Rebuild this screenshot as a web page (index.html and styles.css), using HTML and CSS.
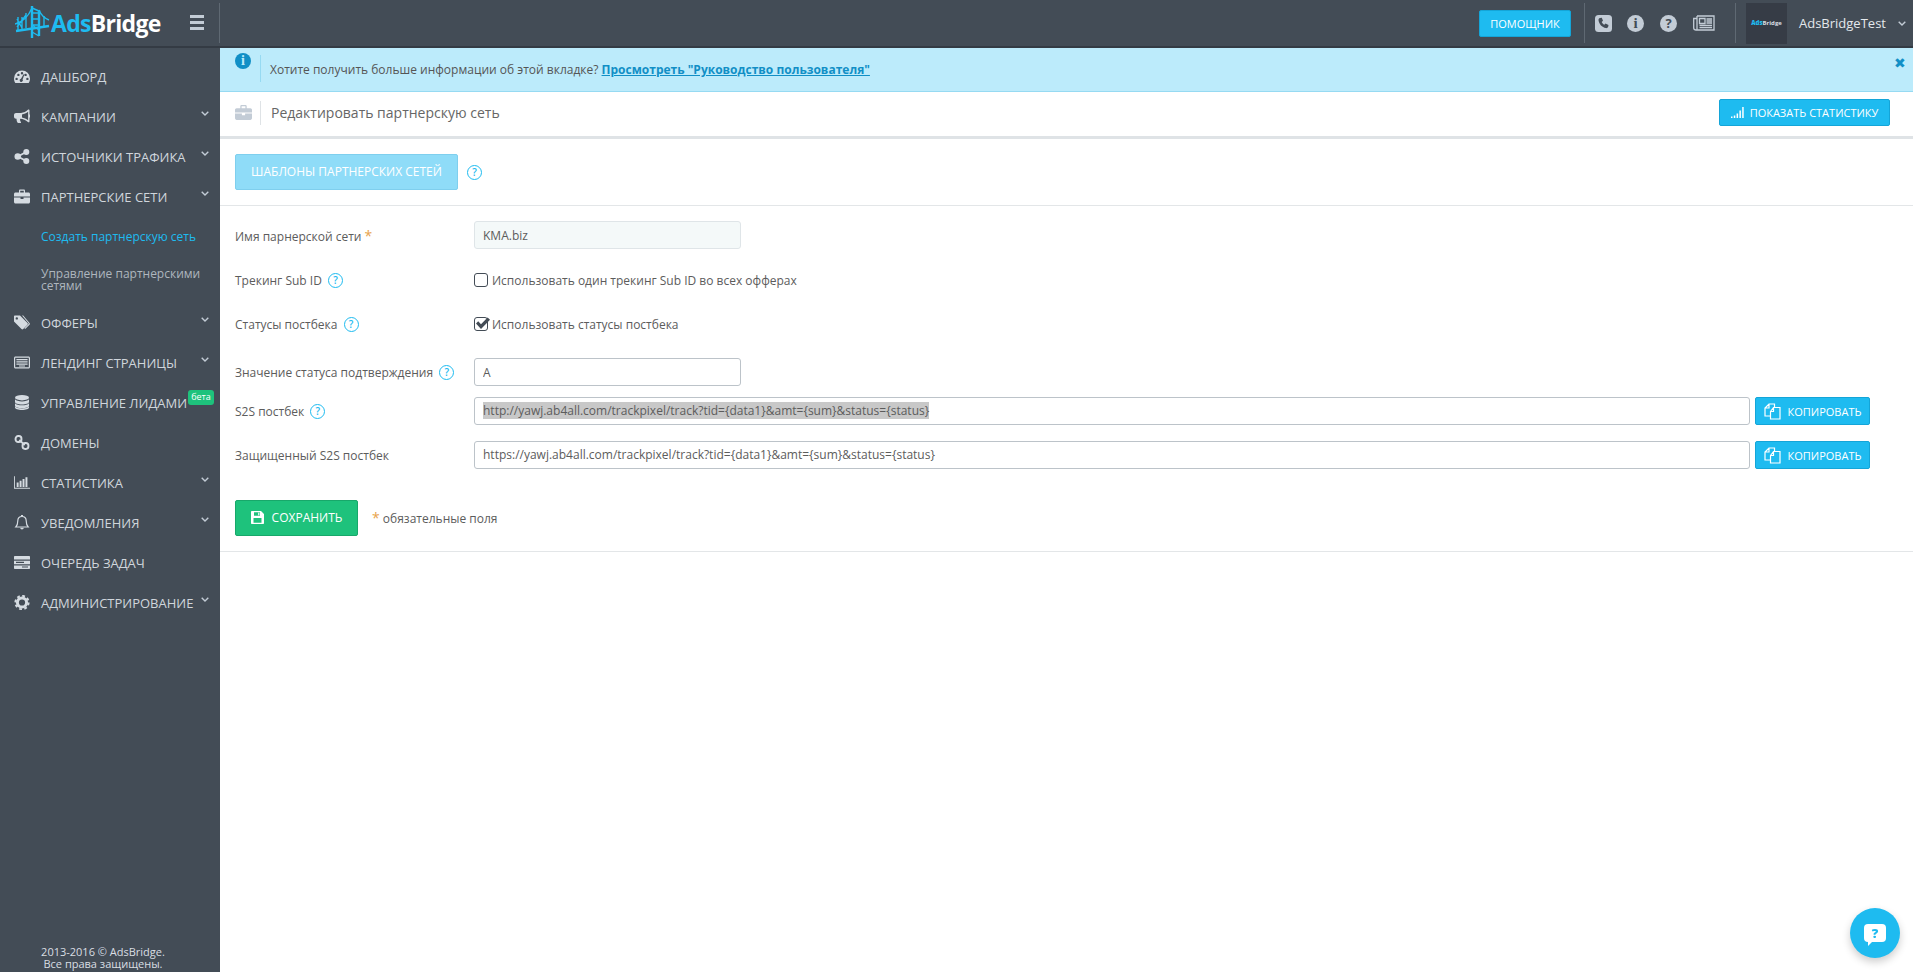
FILE: index.html
```html
<!DOCTYPE html>
<html lang="ru">
<head>
    <meta charset="UTF-8">
    <meta name="viewport" content="width=device-width, initial-scale=1.0">
    <title>AdsBridge - Редактировать партнерскую сеть</title>
    <link rel="stylesheet" href="styles.css">
</head>
<body>
    <!-- Icons -->
    <svg class="sprite" width="0" height="0">
        <symbol id="i-dash" viewBox="0 0 16 14"><path fill-rule="evenodd" d="M8 1a8 8 0 0 0-8 8c0 1.7.5 3.2 1.3 4.4h13.4c.8-1.2 1.3-2.7 1.3-4.4a8 8 0 0 0-8-8zM2.6 8.2a1.2 1.2 0 1 0 0 2.4 1.2 1.2 0 0 0 0-2.4zM4.4 4.2a1.2 1.2 0 1 0 0 2.4 1.2 1.2 0 0 0 0-2.4zM8 2.6a1.2 1.2 0 1 0 0 2.4 1.2 1.2 0 0 0 0-2.4zM11.6 4.2a1.2 1.2 0 1 0 0 2.4 1.2 1.2 0 0 0 0-2.4zM13.4 8.2a1.2 1.2 0 1 0 0 2.4 1.2 1.2 0 0 0 0-2.4zM9.6 4.8 7 9.2a1.6 1.6 0 1 0 1.6.7l1.8-4.8z"/></symbol>
        <symbol id="i-horn" viewBox="0 0 16 14"><path fill-rule="evenodd" d="M14.6 0c-.3 0-.5.1-.7.3C12 2 9.800 3.300 7 3.500H2C.9 3.500 0 4.400 0 5.500v1.800c0 1 .9 2 2 2h.6c-.2 1.300.1 2.600.8 3.700.2.300.5.500.8.500h2.200c.5 0 .8-.5.500-.9-.8-1-1-2.200-.7-3.300 2.800.2 5.700 1.500 7.700 3.200.2.200.4.300.7.300.4 0 .9-.4.900-.9V8a1.500 1.500 0 0 0 0-3V1c0-.6-.4-1-.9-1zm-.5 2.300v8.500c-1.800-1.300-4-2.300-6.100-2.700V4.900c2.100-.3 4.300-1.300 6.100-2.600z"/></symbol>
        <symbol id="i-share" viewBox="0 0 14 14"><circle cx="11" cy="2.800" r="2.800"/><circle cx="3" cy="7" r="3"/><circle cx="11" cy="11.200" r="2.800"/><path d="M3 7l8-4.200M3 7l8 4.200" stroke="currentColor" stroke-width="1.800"/></symbol>
        <symbol id="i-case" viewBox="0 0 16 14"><path fill-rule="evenodd" d="M5 3V1.200C5 .5 5.500 0 6.200 0h3.600C10.500 0 11 .5 11 1.200V3h3.500c.8 0 1.500.7 1.500 1.500V7H0V4.500C0 3.700.7 3 1.500 3zm1.200 0h3.600V1.200H6.200zM0 8h6.500v1.500h3V8H16v4.500c0 .8-.7 1.500-1.500 1.500h-13C.7 14 0 13.300 0 12.500z"/></symbol>
        <symbol id="i-tag" viewBox="0 0 16 14"><path fill-rule="evenodd" d="M1 0h5l7.500 7.500c.5.500.5 1.200 0 1.700l-4.300 4.300c-.5.500-1.200.5-1.700 0L0 6V1c0-.6.4-1 1-1zm1.800 1.700a1.200 1.200 0 1 0 0 2.400 1.200 1.200 0 0 0 0-2.400z"/><path d="M8 0h1.200l6.300 7.500c.5.500.5 1.200 0 1.700l-4.300 4.300-.8-.7 4-4c.4-.5.400-.9 0-1.300z"/></symbol>
        <symbol id="i-list" viewBox="0 0 16 14"><path fill-rule="evenodd" d="M1.500 1h13c.8 0 1.500.7 1.500 1.500v9c0 .8-.7 1.500-1.500 1.500h-13C.7 13 0 12.300 0 11.500v-9C0 1.700.7 1 1.500 1zM1.200 2.200v9.600h13.600V2.200zM2.400 3.400h11.200v1.400H2.400zM2.400 5.800h11.200v1.200H2.400zM2.400 8h11.200v1.200H2.400zM5 10h6v1H5z"/></symbol>
        <symbol id="i-db" viewBox="0 0 14 15"><ellipse cx="7" cy="2.700" rx="7" ry="2.700"/><path d="M0 4.300c1 1.400 3.800 2.100 7 2.100s6-.7 7-2.100v2.600C14 8.400 10.900 9.400 7 9.400S0 8.400 0 6.900zM0 8.200c1 1.300 3.800 2.100 7 2.100s6-.8 7-2.100v2.500c0 1.500-3.100 2.500-7 2.500S0 12.200 0 10.700z"/><path d="M0 11.500c1 1.200 3.800 1.900 7 1.900s6-.7 7-1.900v1c0 1.400-3.100 2.500-7 2.500S0 13.900 0 12.500z"/></symbol>
        <symbol id="i-link" viewBox="0 0 14 14"><g fill="none" stroke="currentColor" stroke-width="1.800"><rect x="1" y="1" width="5.500" height="5.500" rx="2.400"/><rect x="7.500" y="7.500" width="5.500" height="5.500" rx="2.400"/><path d="M4.500 4.500l5 5"/></g></symbol>
        <symbol id="i-bars" viewBox="0 0 18 14"><path d="M0 0h1v13h17v1H0zM3 7h2.200v5H3zM6.300 5h2.200v7H6.300zM9.600 3h2.200v9H9.600zM12.900 1h2.200v11h-2.200z"/></symbol>
        <symbol id="i-bell" viewBox="0 0 14 15"><path fill="none" stroke="currentColor" stroke-width="1.200" d="M7 1.500c-2.600 0-4.200 1.800-4.200 4.200 0 3.200-.9 5-2 6.300h12.400c-1.100-1.300-2-3.100-2-6.300 0-2.400-1.600-4.200-4.200-4.200z"/><path d="M6 0h2v1.500H6zM5.200 12.800h3.600a1.800 1.800 0 0 1-3.600 0z"/></symbol>
        <symbol id="i-queue" viewBox="0 0 16 13"><path fill-rule="evenodd" d="M1 0h14c.6 0 1 .4 1 1v2.500H0V1c0-.6.4-1 1-1zM0 4.700h16v3.600H0zM2 5.800v1.200h8V5.800zM0 9.500h16V12c0 .6-.4 1-1 1H1c-.6 0-1-.4-1-1zm8 1v1h6v-1z"/></symbol>
        <symbol id="i-cog" viewBox="0 0 14 14"><circle cx="7" cy="7" r="4.300" fill="none" stroke="currentColor" stroke-width="2.800"/><circle cx="7" cy="7" r="6.200" fill="none" stroke="currentColor" stroke-width="1.800" stroke-dasharray="2.600 2.270"/></symbol>
        <symbol id="i-down" viewBox="0 0 8 5"><path fill="none" stroke="currentColor" stroke-width="1.400" d="M.7.8 4 4 7.300.8"/></symbol>
        <symbol id="i-copy" viewBox="0 0 17 17"><path fill="none" stroke="currentColor" stroke-width="1.200" d="M10.500 4.500V1H5L1 5v8h5M5 1v4H1M6.500 8.500l3-4H16V16H6.500zM9.500 4.500v4h-3"/></symbol>
    </svg>

    <header class="topbar">
        <a class="logo">
            <svg class="logo-mark" viewBox="0 0 36 36" fill="none" stroke="#1ebbf0" stroke-width="1.400">
                <path stroke-width="2.400" d="M17 1v32M24 5v26"/>
                <path d="M17 3l7 3M17 8h7M17 14h7M17 20h7M17 20l7 5M17 27l7 4"/>
                <path d="M0 19C8 17 14 10 17 3M24 5c2 5 5 8 10 10"/>
                <path stroke-width="2.400" d="M1 26l33-5"/>
                <path d="M3 12v13M7 12v12M11 8v15M2 22l9-12M29 11v10M2 14l5 9"/>
            </svg>
            <span class="logo-ads">Ads</span><span class="logo-bridge">Bridge</span>
        </a>
        <button class="burger"><i></i><i></i><i></i></button>
        <div class="topbar-right">
            <a class="btn btn-help">ПОМОЩНИК</a>
            <div class="top-icons">
                <span class="ico-phone">
                    <svg viewBox="0 0 17 17"><rect width="17" height="17" rx="3.500" fill="#c3ccd6"/><path fill="#434c56" d="M5 3l1.800-.2 1.200 3-1.300 1.200c.5 1.200 1.300 2.100 2.600 2.800l1.200-1.300 3 1.400-.3 1.900c-.4 1-1.300 1.500-2.300 1.300C7 12.200 4.200 9.300 3.500 5.200 3.400 4.200 4 3.400 5 3z"/></svg>
                </span>
                <span class="ico-round ico-i">i</span>
                <span class="ico-round">?</span>
                <span class="ico-news">
                    <svg viewBox="0 0 22 16" fill="none" stroke="#c3ccd6" stroke-width="1.300"><path d="M4 1h17v14H3M4 1v13.500M3 15c-1.300 0-2.300-.6-2.300-2V3.500H4"/><path d="M6.500 3.500h5.500v5H6.500zM13.500 4h5.500M13.500 6h5.500M13.500 8h5.500M6.500 10.500H19M6.500 12.700H19"/></svg>
                </span>
            </div>
            <div class="account">
                <div class="avatar"><b>Ads</b>Bridge</div>
                <span class="account-name">AdsBridgeTest</span>
                <svg class="chev"><use href="#i-down"/></svg>
            </div>
        </div>
    </header>

    <div class="page">
        <nav class="sidebar">
            <ul class="menu">
                <li><svg class="mi"><use href="#i-dash"/></svg>ДАШБОРД</li>
                <li><svg class="mi"><use href="#i-horn"/></svg>КАМПАНИИ<svg class="chev"><use href="#i-down"/></svg></li>
                <li><svg class="mi"><use href="#i-share"/></svg>ИСТОЧНИКИ ТРАФИКА<svg class="chev"><use href="#i-down"/></svg></li>
                <li><svg class="mi"><use href="#i-case"/></svg>ПАРТНЕРСКИЕ СЕТИ<svg class="chev"><use href="#i-down"/></svg></li>
                <li class="sub active">Создать партнерскую сеть</li>
                <li class="sub">Управление партнерскими сетями</li>
                <li><svg class="mi"><use href="#i-tag"/></svg>ОФФЕРЫ<svg class="chev"><use href="#i-down"/></svg></li>
                <li><svg class="mi"><use href="#i-list"/></svg>ЛЕНДИНГ СТРАНИЦЫ<svg class="chev"><use href="#i-down"/></svg></li>
                <li><svg class="mi"><use href="#i-db"/></svg>УПРАВЛЕНИЕ ЛИДАМИ<span class="beta">бета</span></li>
                <li><svg class="mi"><use href="#i-link"/></svg>ДОМЕНЫ</li>
                <li><svg class="mi"><use href="#i-bars"/></svg>СТАТИСТИКА<svg class="chev"><use href="#i-down"/></svg></li>
                <li><svg class="mi"><use href="#i-bell"/></svg>УВЕДОМЛЕНИЯ<svg class="chev"><use href="#i-down"/></svg></li>
                <li><svg class="mi"><use href="#i-queue"/></svg>ОЧЕРЕДЬ ЗАДАЧ</li>
                <li><svg class="mi"><use href="#i-cog"/></svg>АДМИНИСТРИРОВАНИЕ<svg class="chev"><use href="#i-down"/></svg></li>
            </ul>
            <div class="copyright">2013-2016 © AdsBridge.<br>Все права защищены.</div>
        </nav>

        <main class="content">
            <div class="alert">
                <span class="alert-icon">i</span>
                <span class="alert-sep"></span>
                <span class="alert-text">Хотите получить больше информации об этой вкладке? <a>Просмотреть "Руководство пользователя"</a></span>
                <span class="alert-close">✖</span>
            </div>

            <div class="title-bar">
                <svg class="title-icon"><use href="#i-case"/></svg>
                <span class="title-sep"></span>
                <h1>Редактировать партнерскую сеть</h1>
                <a class="btn btn-stats">
                    <svg viewBox="0 0 13 11" fill="#fff"><path d="M0 9.500h1.500V11H0zM2.800 8.500h1.500V11H2.800zM5.600 6.500h1.500V11H5.600zM8.400 3.500h1.500V11H8.400zM11.200 0h1.500v11h-1.500z"/></svg>
                    ПОКАЗАТЬ СТАТИСТИКУ
                </a>
            </div>

            <div class="templates">
                <a class="btn btn-disabled">ШАБЛОНЫ ПАРТНЕРСКИХ СЕТЕЙ</a>
                <span class="hint">?</span>
            </div>

            <form class="form">
                <div class="row row-name">
                    <label class="lbl">Имя парнерской сети <span class="req">*</span></label>
                    <input class="field field-short field-ro" type="text" value="KMA.biz">
                </div>
                <div class="row row-track">
                    <label class="lbl">Трекинг Sub ID <span class="hint">?</span></label>
                    <label class="check"><span class="box"></span>Использовать один трекинг Sub ID во всех офферах</label>
                </div>
                <div class="row row-status">
                    <label class="lbl">Статусы постбека <span class="hint">?</span></label>
                    <label class="check">
                        <span class="box">
                            <svg viewBox="0 0 15 13"><path fill="#434c56" d="M1 6.500 3.200 4.300 6 7.200 12.600.5 15 2.700 6 12z"/></svg>
                        </span>Использовать статусы постбека
                    </label>
                </div>
                <div class="row row-value">
                    <label class="lbl">Значение статуса подтверждения <span class="hint">?</span></label>
                    <input class="field field-short" type="text" value="A">
                </div>
                <div class="row row-s2s">
                    <label class="lbl">S2S постбек <span class="hint">?</span></label>
                    <div class="field field-wide"><span class="selected">http://yawj.ab4all.com/trackpixel/track?tid={data1}&amp;amt={sum}&amp;status={status}</span></div>
                    <a class="btn btn-copy"><svg><use href="#i-copy"/></svg>КОПИРОВАТЬ</a>
                </div>
                <div class="row row-secure">
                    <label class="lbl">Защищенный S2S постбек</label>
                    <div class="field field-wide">https://yawj.ab4all.com/trackpixel/track?tid={data1}&amp;amt={sum}&amp;status={status}</div>
                    <a class="btn btn-copy"><svg><use href="#i-copy"/></svg>КОПИРОВАТЬ</a>
                </div>
                <div class="actions">
                    <button class="btn btn-save" type="button">
                        <svg viewBox="0 0 13 13"><path fill="#fff" fill-rule="evenodd" d="M1 0h9l3 3v9c0 .6-.4 1-1 1H1c-.6 0-1-.4-1-1V1c0-.6.4-1 1-1zm2 1.200v3.600h6V1.200zm4.200.5h1.200v2.500H7.200zM2.500 7v4.800h8V7z"/></svg>
                        СОХРАНИТЬ
                    </button>
                    <span class="note"><span class="req">*</span> обязательные поля</span>
                </div>
            </form>
        </main>
    </div>

    <a class="chat">
        <span class="chat-bubble">?</span>
    </a>
</body>
</html>
```

FILE: styles.css
```css
* {
    box-sizing: border-box;
}

html, body {
    height: 100%;
}

body {
    margin: 0;
    font-family: "Open Sans", sans-serif;
    font-size: 12px;
    color: #5c5c5c;
    background-color: #fff;
    overflow: hidden;
}

.sprite {
    position: absolute;
}

a {
    text-decoration: none;
}

/* Top bar */
.topbar {
    display: flex;
    align-items: center;
    height: 48px;
    background-color: #434c56;
    border-bottom: 2px solid #343b44;
}

.logo {
    display: flex;
    align-items: center;
    width: 190px;
    height: 46px;
    padding-left: 15px;
    font-size: 23px;
    font-weight: 700;
    letter-spacing: -0.7px;
}

.logo-mark {
    width: 36px;
    height: 36px;
    flex-shrink: 0;
}

.logo-ads {
    color: #1ebbf0;
}

.logo-bridge {
    color: #fff;
}

.burger {
    display: flex;
    flex-direction: column;
    gap: 3px;
    width: 30px;
    height: 40px;
    padding: 12px 0 0;
    border: none;
    border-right: 1px solid #5f6973;
    background: none;
}

.burger i {
    display: block;
    width: 14px;
    height: 3px;
    background-color: #c3ccd6;
}

.topbar-right {
    display: flex;
    align-items: center;
    margin-left: auto;
    height: 46px;
}

.btn {
    display: inline-flex;
    align-items: center;
    justify-content: center;
    color: #fff;
    background-color: #1ebbf0;
    border: 1px solid #14a5d8;
    border-radius: 2px;
    font-family: inherit;
    font-size: 12px;
    cursor: pointer;
}

.btn-help {
    width: 92px;
    height: 27px;
    margin-right: 13px;
    font-size: 11px;
}

.top-icons {
    display: flex;
    align-items: center;
    height: 40px;
    padding: 0 20px 0 10px;
    border-left: 1px solid #5f6973;
    border-right: 1px solid #5f6973;
}

.top-icons span {
    display: block;
}

.ico-phone {
    width: 17px;
    height: 17px;
    margin-right: 15px;
}

.ico-phone svg {
    display: block;
}

.ico-round {
    width: 17px;
    height: 17px;
    margin-right: 16px;
    border-radius: 50%;
    background-color: #c3ccd6;
    color: #434c56;
    font-size: 13px;
    font-weight: 700;
    line-height: 17px;
    text-align: center;
}

.ico-i {
    font-family: "Liberation Serif", serif;
    font-size: 15px;
}

.ico-news {
    width: 22px;
    height: 16px;
}

.ico-news svg {
    display: block;
}

.account {
    display: flex;
    align-items: center;
    width: 177px;
    padding-left: 10px;
}

.avatar {
    width: 41px;
    height: 41px;
    margin-right: 12px;
    background-color: #363c46;
    color: #d8dde2;
    font-size: 6px;
    font-weight: 700;
    line-height: 41px;
    text-align: center;
}

.avatar b {
    color: #1ebbf0;
}

.account-name {
    color: #e4e8ec;
    font-size: 13px;
}

.account .chev {
    position: static;
    margin-left: 12px;
    color: #c3ccd6;
}

/* Sidebar */
.page {
    display: flex;
    height: calc(100% - 48px);
}

.sidebar {
    display: flex;
    flex-direction: column;
    justify-content: space-between;
    flex-shrink: 0;
    width: 220px;
    padding-top: 9px;
    background-color: #434c56;
}

.menu {
    margin: 0;
    padding: 0;
    list-style: none;
}

.menu li {
    position: relative;
    display: flex;
    align-items: center;
    height: 40px;
    padding-left: 41px;
    color: #d0d6dc;
    font-size: 13px;
}

.menu .sub {
    font-size: 12px;
    line-height: 12px;
    padding-right: 10px;
    color: #aeb6be;
}

.menu .sub + .sub {
    height: 46px;
}

.menu .sub.active {
    color: #1ebbf0;
}

.mi {
    position: absolute;
    left: 14px;
    top: 12px;
    width: 16px;
    height: 15px;
    fill: #d5dbe1;
    color: #d5dbe1;
}

.chev {
    position: absolute;
    right: 11px;
    top: 14px;
    width: 8px;
    height: 5px;
    color: #c3ccd6;
}

.beta {
    position: absolute;
    left: 188px;
    top: 7px;
    width: 26px;
    height: 15px;
    border-radius: 3px;
    background-color: #1ec27c;
    color: #fff;
    font-size: 9px;
    line-height: 14px;
    text-align: center;
}

.copyright {
    width: 206px;
    padding-bottom: 2px;
    color: #d9dee3;
    font-size: 11px;
    line-height: 12px;
    text-align: center;
}

/* Content */
.content {
    flex: 1;
    min-width: 0;
}

.alert {
    position: relative;
    display: flex;
    height: 44px;
    padding-left: 15px;
    background-color: #bcebfb;
    border-bottom: 1px solid #96daf2;
}

.alert-icon {
    width: 16px;
    height: 16px;
    margin-top: 5px;
    border-radius: 50%;
    background-color: #118fc6;
    color: #bcebfb;
    font-family: "Liberation Serif", serif;
    font-size: 14px;
    font-weight: 700;
    line-height: 16px;
    text-align: center;
}

.alert-sep {
    width: 1px;
    height: 27px;
    margin: 7px 9px 0 9px;
    background-color: #96daf2;
}

.alert-text {
    padding-top: 14px;
    font-size: 12px;
    line-height: 16px;
    color: #555;
}

.alert-text a {
    color: #118fc6;
    font-weight: 700;
    text-decoration: underline;
}

.alert-close {
    position: absolute;
    right: 7px;
    top: 8px;
    color: #118fc6;
    font-size: 14px;
    line-height: 14px;
}

.title-bar {
    display: flex;
    align-items: center;
    height: 47px;
    padding: 0 23px 3px 15px;
    border-bottom: 3px solid #dfe3e6;
}

.title-icon {
    width: 17px;
    height: 15px;
    fill: #c3ccd6;
}

.title-sep {
    width: 1px;
    height: 24px;
    margin: 0 10px 0 8px;
    background-color: #dfe3e6;
}

.title-bar h1 {
    margin: 0;
    color: #666;
    font-size: 14px;
    font-weight: 400;
}

.btn-stats {
    gap: 6px;
    width: 171px;
    height: 27px;
    margin-left: auto;
    font-size: 11px;
}

.btn-stats svg {
    width: 13px;
    height: 11px;
}

.templates {
    display: flex;
    align-items: center;
    height: 67px;
    padding-left: 15px;
    border-bottom: 1px solid #e3e6e8;
}

.btn-disabled {
    width: 223px;
    height: 36px;
    padding-bottom: 2px;
    background-color: #8fdcf8;
    border-color: #7fcfee;
    font-weight: 400;
    cursor: default;
}

.templates .hint {
    margin-left: 9px;
}

.hint {
    display: inline-block;
    width: 15px;
    height: 15px;
    margin-left: 3px;
    border: 1px solid #1ebbf0;
    border-radius: 50%;
    color: #1ebbf0;
    font-size: 10px;
    font-weight: 600;
    line-height: 13px;
    text-align: center;
    vertical-align: 1px;
}

/* Form */
.form {
    padding: 15px 0 15px 15px;
    border-bottom: 1px solid #e3e6e8;
}

.row {
    display: flex;
    align-items: center;
    height: 28px;
}

.row-track {
    margin-top: 17px;
}

.row-status {
    margin-top: 16px;
}

.row-value {
    margin-top: 20px;
}

.row-s2s {
    margin-top: 11px;
}

.row-secure {
    margin-top: 16px;
}

.lbl {
    flex-shrink: 0;
    width: 239px;
    color: #5c5c5c;
}

.req {
    color: #e8a34c;
    font-size: 14px;
}

.field {
    display: block;
    height: 28px;
    padding: 0 8px;
    border: 1px solid #bcc3c9;
    border-radius: 3px;
    background-color: #fff;
    color: #5c5c5c;
    font-family: inherit;
    font-size: 12px;
    line-height: 26px;
}

.field-short {
    width: 267px;
}

.field-ro {
    background-color: #f4f9f9;
    border-color: #dfe5e8;
}

.field-wide {
    width: 1276px;
    white-space: nowrap;
}

.selected {
    display: inline-block;
    height: 17px;
    line-height: 17px;
    background-color: #c8c8c8;
}

.check {
    display: flex;
    align-items: center;
    color: #5c5c5c;
}

.box {
    position: relative;
    width: 14px;
    height: 14px;
    margin-right: 4px;
    border: 1px solid #434c56;
    border-radius: 3px;
    background-color: #fff;
}

.box svg {
    position: absolute;
    left: 0;
    top: -1px;
    width: 15px;
    height: 13px;
}

.btn-copy {
    gap: 7px;
    width: 115px;
    height: 28px;
    margin-left: 5px;
    font-size: 11px;
}

.btn-copy svg {
    width: 17px;
    height: 17px;
}

.actions {
    display: flex;
    align-items: center;
    margin-top: 31px;
}

.btn-save {
    gap: 8px;
    width: 123px;
    height: 36px;
    padding-bottom: 2px;
    background-color: #1ec27c;
    border-color: #18a86a;
}

.btn-save svg {
    width: 13px;
    height: 13px;
}

.note {
    margin-left: 14px;
    padding-bottom: 2px;
}

/* Chat button */
.chat {
    position: fixed;
    right: 13px;
    bottom: 14px;
    display: flex;
    align-items: center;
    justify-content: center;
    width: 50px;
    height: 50px;
    border-radius: 50%;
    background-color: #1ebbf0;
    box-shadow: 0 4px 8px rgba(0, 0, 0, 0.2);
}

.chat-bubble {
    position: relative;
    width: 22px;
    height: 18px;
    border-radius: 4px;
    background-color: #fff;
    color: #1ebbf0;
    font-size: 13px;
    font-weight: 800;
    line-height: 18px;
    text-align: center;
}

.chat-bubble::after {
    content: "";
    position: absolute;
    left: 4px;
    bottom: -4px;
    border-top: 5px solid #fff;
    border-right: 5px solid transparent;
}
```
